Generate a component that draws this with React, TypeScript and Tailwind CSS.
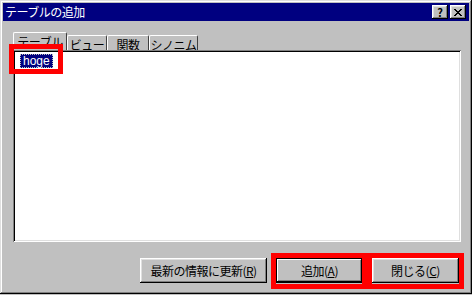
import React from "react"

const font = { fontFamily: '"Noto Sans CJK JP", "Liberation Sans", sans-serif' }

function CaptionButton({ children }: { children: React.ReactNode }) {
  return (
    <div className="flex h-[14px] w-[16px] items-center justify-center bg-[#c0c0c0] text-[11px] font-bold leading-none text-black shadow-[inset_-1px_-1px_#000,inset_1px_1px_#fff,inset_-2px_-2px_#808080,inset_2px_2px_#dfdfdf]">
      {children}
    </div>
  )
}

function Tab({ label, active = false, width }: { label: string; active?: boolean; width: string }) {
  return (
    <div
      className={
        "flex items-start justify-center rounded-t-[2px] border-l border-t border-r border-l-white border-t-white border-r-[#404040] bg-[#c0c0c0] pt-[2px] text-[12px] leading-[14px] tracking-[-0.5px] text-black " +
        width +
        (active ? " relative z-10 -mb-[1px] h-[19px]" : " h-[15px]")
      }
    >
      {label}
    </div>
  )
}

function Button({
  children,
  width,
  isDefault = false,
  highlight,
}: {
  children: React.ReactNode
  width: string
  isDefault?: boolean
  highlight?: string
}) {
  return (
    <div className={"relative " + width}>
      <div
        className={
          "flex h-[25px] w-full items-center justify-center bg-[#c0c0c0] text-[12px] tracking-[-0.5px] text-black " +
          (isDefault
            ? "shadow-[inset_0_0_0_1px_#000,inset_-2px_-2px_#000,inset_2px_2px_#fff,inset_-3px_-3px_#808080]"
            : "shadow-[inset_-1px_-1px_#000,inset_1px_1px_#fff,inset_-2px_-2px_#808080,inset_2px_2px_#dfdfdf]")
        }
      >
        {children}
      </div>
      {highlight && <div className={"pointer-events-none absolute border-[5px] border-[#f00] " + highlight} />}
    </div>
  )
}

export default function App() {
  return (
    <div className="h-[295px] w-[472px] overflow-hidden bg-[#c0c0c0]" style={font}>
      <div className="flex h-[294px] w-[472px] flex-col bg-[#c0c0c0] p-[3px] shadow-[inset_-1px_-1px_#000,inset_1px_1px_#dfdfdf,inset_-2px_-2px_#808080,inset_2px_2px_#fff]">
        {/* title bar */}
        <div className="flex h-[18px] items-center justify-between bg-[#000080] pl-[2px] pr-[3px]">
          <span className="text-[12px] leading-none tracking-[-0.5px] text-white">テーブルの追加</span>
          <div className="flex gap-[2px]">
            <CaptionButton>?</CaptionButton>
            <CaptionButton>
              <svg width="8" height="7" viewBox="0 0 8 7">
                <path d="M0 0h2v1h1v1h2v-1h1v-1h2v1h-1v1h-1v1h-1v1h1v1h1v1h1v1h-2v-1h-1v-1h-2v1h-1v1h-2v-1h1v-1h1v-1h1v-1h-1v-1h-1v-1h-1z" fill="#000" />
              </svg>
            </CaptionButton>
          </div>
        </div>

        <div className="flex flex-1 flex-col pl-[10px] pr-[8px] pt-[11px]">
          {/* tabs */}
          <div className="flex h-[18px] items-end">
            <Tab label="テーブル" active width="w-[54px]" />
            <Tab label="ビュー" width="w-[40px]" />
            <Tab label="関数" width="w-[42px]" />
            <Tab label="シノニム" width="w-[49px]" />
          </div>

          {/* list */}
          <div className="relative z-20 flex h-[192px] flex-col items-start bg-white pl-[7px] pt-[4px] shadow-[inset_1px_1px_#808080,inset_-1px_-1px_#fff,inset_2px_2px_#000,inset_-2px_-2px_#dfdfdf]">
            <div className="relative">
              <div
                className="flex h-[14px] items-center border border-dotted border-[#c0c0c0] bg-[#000080] px-[2px] text-[12px] text-white"
                style={{ fontFamily: '"Liberation Sans", sans-serif' }}
              >
                hoge
              </div>
              <div className="pointer-events-none absolute -bottom-[6px] -left-[11px] -right-[10px] -top-[10px] border-[5px] border-[#f00]" />
            </div>
          </div>

          {/* buttons */}
          <div className="mt-[16px] flex justify-end gap-[9px] pr-[2px]">
            <Button width="w-[127px]">
              最新の情報に更新(<span className="underline">R</span>)
            </Button>
            <Button width="w-[87px]" isDefault highlight="-left-[5px] -right-[4px] -top-[5px] -bottom-[6px]">
              追加(<span className="underline">A</span>)
            </Button>
            <Button width="w-[87px]" highlight="-left-[5px] -right-[5px] -top-[5px] -bottom-[6px]">
              閉じる(<span className="underline">C</span>)
            </Button>
          </div>
        </div>
      </div>
    </div>
  )
}
